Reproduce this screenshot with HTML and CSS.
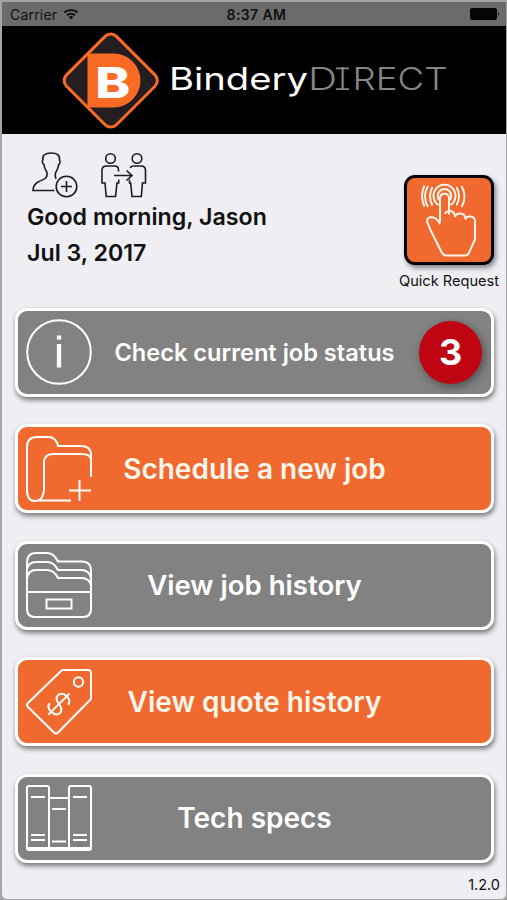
FILE: index.html
```html
<!DOCTYPE html>
<html lang="en">
  <head>
    <meta charset="UTF-8" />
    <meta name="viewport" content="width=device-width, initial-scale=1.0" />
    <title>BinderyDIRECT</title>
    <link rel="stylesheet" href="styles.css">
  </head>
  <body>
    <div class="phone">
      <div class="status-bar">
        <div class="carrier">
          <span>Carrier</span>
          <svg width="16" height="12" viewBox="0 0 16 12">
            <path d="M1.4 4.6a9.6 9.6 0 0 1 13.2 0M4 7.3a5.8 5.8 0 0 1 8 0" fill="none" stroke="#111" stroke-width="2"/>
            <path d="M5.7 9a3.4 3.4 0 0 1 4.6 0L8 11.5z" fill="#111"/>
          </svg>
        </div>
        <strong class="clock">8:37 AM</strong>
        <svg class="battery" width="30" height="12" viewBox="0 0 30 12">
          <rect x="0" y="0" width="27" height="12" rx="2" fill="#050505"/>
          <path d="M28 4q2 2 0 4z" fill="#050505"/>
        </svg>
      </div>

      <header>
        <svg class="logo" width="504" height="108" viewBox="2 26 504 108">
          <rect x="75.500" y="45.300" width="70.500" height="70.500" rx="8" transform="rotate(45 110.75 80.55)" fill="#241e20" stroke="#f96a25" stroke-width="3"/>
          <path d="M87.500 53.500H113.500a27 27 0 0 1 0 54H87.500z" fill="#f96a25"/>
          <text class="logo-b" x="95.300" y="98" textLength="35" lengthAdjust="spacingAndGlyphs">B</text>
          <text class="logo-bindery" x="169" y="90" textLength="139" lengthAdjust="spacingAndGlyphs">Bindery</text>
          <text class="logo-direct" x="308" y="90" textLength="29" lengthAdjust="spacingAndGlyphs">D</text>
          <text class="logo-direct" x="338.500" y="90">I</text>
          <path d="M336 68.300h13M336 89.200h13" stroke="#858585" stroke-width="1.700"/>
          <text class="logo-direct" x="352.500" y="90" textLength="95" lengthAdjust="spacingAndGlyphs">RECT</text>
        </svg>
      </header>

      <section class="welcome">
        <div class="greeting">
          <div class="user-icons">
            <svg width="46" height="46" viewBox="32 152 46 46">
              <path d="M54.500 190.500H33c0-5 2-7 6-9 5-2.500 9-3 8-9-2-3-3-5-3-8-2-1-2-4-1-5-1-4 2-6.500 8-6.500s9 2 8.500 7c1 1 .5 4-1 5 0 3-1.500 5-3 8-.5 2-.3 4 .5 6"/>
              <circle cx="66.500" cy="186.500" r="10.300"/>
              <path d="M61 186.500h11M66.500 181v11"/>
            </svg>
            <svg width="48" height="46" viewBox="100 152 48 46">
              <circle cx="110.500" cy="158.500" r="4.800"/>
              <circle cx="137" cy="158.500" r="4.800"/>
              <path d="M118.500 171.500v-2q0-3.500-4-3.500h-8q-4.500 0-4.500 4.500V183h3l1.200 13.500h9.300L117 183h1.700v-3.500"/>
              <path d="M130.500 168q0-2 4-2h6.500q4.500 0 4.500 4.500V183h-3l-1.200 13.500h-9.300L130.700 183h-1.200v-3.500"/>
              <path d="M114 175.500h18M126.500 170.500l5.500 5-5.500 5"/>
            </svg>
          </div>
          <p>Good morning, Jason</p>
          <p>Jul 3, 2017</p>
        </div>
        <div class="quick">
          <button class="quick-btn">
            <svg width="84" height="84" viewBox="407 178 84 84">
              <path d="M440 222V198.500q0-4.800 4.500-4.800t4.500 4.800v16M440 224q-3-6.500-9-7-5 1-3.500 6l3.500 8 10.500 21q2 3.500 4.500 3.500h19q3 0 4-3l6-13v-18q0-5-5-5-4 0-4.500 3 0-6-5.500-6-4.500 0-5 3.500-.5-6-5-6-4 0-5 3"/>
              <path d="M438.500 205a11 11 0 1 1 12 0M440 201a6.800 6.800 0 1 1 9 0"/>
              <path d="M432.500 187q-5 9 0 18.500M428 186q-6 10.500 0 21M424.500 185.500q-5 10.500 0 21M456.500 187q5 9 0 18.500M461.500 186q6 10.500 0 21"/>
            </svg>
          </button>
          <span>Quick Request</span>
        </div>
      </section>

      <nav class="menu">
        <button class="menu-btn gray">
          <svg viewBox="0 0 66 66">
            <circle cx="33" cy="33" r="31.800"/>
            <path d="M33 25V48.500M33 16.500v4" stroke-width="4.300"/>
          </svg>
          <span class="label status">Check current job status</span>
          <span class="badge">3</span>
        </button>

        <button class="menu-btn orange">
          <svg viewBox="0 0 66 66">
            <path d="M65 41V19q0-9-10-9H32q-2-9-10-9H11Q1 1 1 11v43q0 11 8 11t9-11V27q0-9 9-9h28q10 0 10 6M13 64.500h32M53.500 44v21M43 54.500h22"/>
          </svg>
          <span class="label">Schedule a new job</span>
        </button>

        <button class="menu-btn gray">
          <svg viewBox="0 0 66 66">
            <path d="M1 40V11Q1 1 10 1h11q7 0 11 8.500h24q9 0 9 9V57q0 8-8 8H9q-8 0-8-8V40h64"/>
            <path d="M1 18q1-8 9-8h11q7 0 11 8h23q9 0 10 9M1 27q1-9 9-9h11q7 0 11 8h23q9 0 10 8"/>
            <path d="M20.500 47.500h25v9h-25z"/>
          </svg>
          <span class="label job-history">View job history</span>
        </button>

        <button class="menu-btn orange">
          <svg viewBox="0 0 66 66">
            <path d="M37 1h25q3 0 3 3v26L32 63.500q-2 2-4 0L2 38q-2-2 0-4L35 2q1-1 2-1z"/>
            <circle cx="52.500" cy="13" r="4.700"/>
            <g transform="translate(33 35) rotate(45)">
              <path d="M7-6q-1-5-7-5t-7 5.500Q-7-1 0 0t7 5.500Q7 11 0 11t-7-5M0-15v30"/>
            </g>
          </svg>
          <span class="label">View quote history</span>
        </button>

        <button class="menu-btn gray">
          <svg viewBox="0 0 66 66">
            <path d="M1 3q0-2 2-2h18q2 0 2 2v62H3q-2 0-2-2zM43 65V3q0-2 2-2h18q2 0 2 2v60q0 2-2 2H23M23 13h20M2 63h62"/>
            <path d="M5 12h14M5 50h14M5 55h14M26 24h14M26 56.500h14M47 12h14M47 50h14M47 55h14"/>
          </svg>
          <span class="label">Tech specs</span>
        </button>
      </nav>

      <footer>1.2.0</footer>
    </div>
  </body>
</html>
```
FILE: styles.css
```css
* {
  box-sizing: border-box;
}
body {
  margin: 0;
  padding: 2px 1px 1px 2px;
  height: 900px;
  background: #a5a5a7;
  font-family: Inter, "Liberation Sans", sans-serif;
  color: #111;
}
.phone {
  height: 897px;
  background: #efeef3;
  border-radius: 0 0 5px 5px;
  overflow: hidden;
}
.status-bar {
  height: 24px;
  padding: 0 6px 0 8px;
  display: grid;
  grid-template-columns: 1fr auto 1fr;
  align-items: center;
  background: #6b6b6b;
  font-size: 14px;
}
.carrier {
  display: flex;
  align-items: center;
  gap: 6px;
  letter-spacing: 0.2px;
}
.clock {
  padding-left: 3px;
  font-size: 14px;
  font-weight: 600;
  letter-spacing: 0.4px;
}
.battery {
  justify-self: end;
}
header {
  height: 108px;
  background: #000;
}
.logo {
  display: block;
}
.logo-b {
  font-size: 43px;
  font-weight: 800;
  fill: #fff;
}
.logo-bindery {
  font-size: 31px;
  font-weight: 400;
  fill: #fff;
}
.logo-direct {
  font-size: 31px;
  font-weight: 300;
  fill: #858585;
}
.welcome {
  height: 173.6px;
  padding: 18px 7px 0 25px;
  display: flex;
  justify-content: space-between;
}
.user-icons {
  display: flex;
  gap: 22px;
  padding: 0 0 1px 5px;
}
.user-icons svg {
  fill: none;
  stroke: #1c1c1e;
  stroke-width: 1.6;
}
.greeting p {
  margin: 0;
  font-size: 23.2px;
  font-weight: 600;
  line-height: 36px;
}
.quick {
  display: flex;
  flex-direction: column;
  align-items: center;
  padding-top: 23px;
  font-size: 14.6px;
}
.quick span {
  margin-top: 7px;
  white-space: nowrap;
}
.quick-btn {
  width: 90px;
  height: 90px;
  padding: 0;
  border: 3px solid #000;
  border-radius: 11px;
  background: #f06a30;
  box-shadow: 2px 3px 5px rgba(0, 0, 0, 0.45);
}
.quick-btn svg {
  display: block;
  fill: none;
  stroke: #fff5ea;
  stroke-width: 2;
}
.menu {
  padding: 0 12px 0 13px;
  display: flex;
  flex-direction: column;
  gap: 27.5px;
}
.menu-btn {
  height: 89px;
  padding: 0 8px;
  display: grid;
  grid-template-columns: 66px 1fr 66px;
  align-items: center;
  border: 3px solid #fff;
  border-radius: 12px;
  box-shadow: 1px 3px 5px rgba(0, 0, 0, 0.5);
  font-family: inherit;
  color: #fff;
}
.menu-btn svg {
  width: 66px;
  height: 66px;
  fill: none;
  stroke: #fff;
  stroke-width: 2;
}
.gray {
  background: #828282;
}
.orange {
  background: #f06a30;
}
.orange .label {
  color: #fff5ea;
}
.label {
  justify-self: center;
  margin: 0 -20px;
  font-size: 28px;
  font-weight: 600;
  white-space: nowrap;
}
.label.status {
  font-size: 23.6px;
}
.label.job-history {
  font-size: 27.6px;
}
.badge {
  justify-self: end;
  width: 63px;
  height: 63px;
  margin-right: 1px;
  border-radius: 50%;
  background: #c00512;
  box-shadow: 2px 3px 8px rgba(0, 0, 0, 0.4);
  font-size: 36px;
  font-weight: 700;
  line-height: 63px;
  text-align: center;
}
footer {
  padding: 13px 6px 0;
  font-size: 14.5px;
  text-align: right;
}
```
